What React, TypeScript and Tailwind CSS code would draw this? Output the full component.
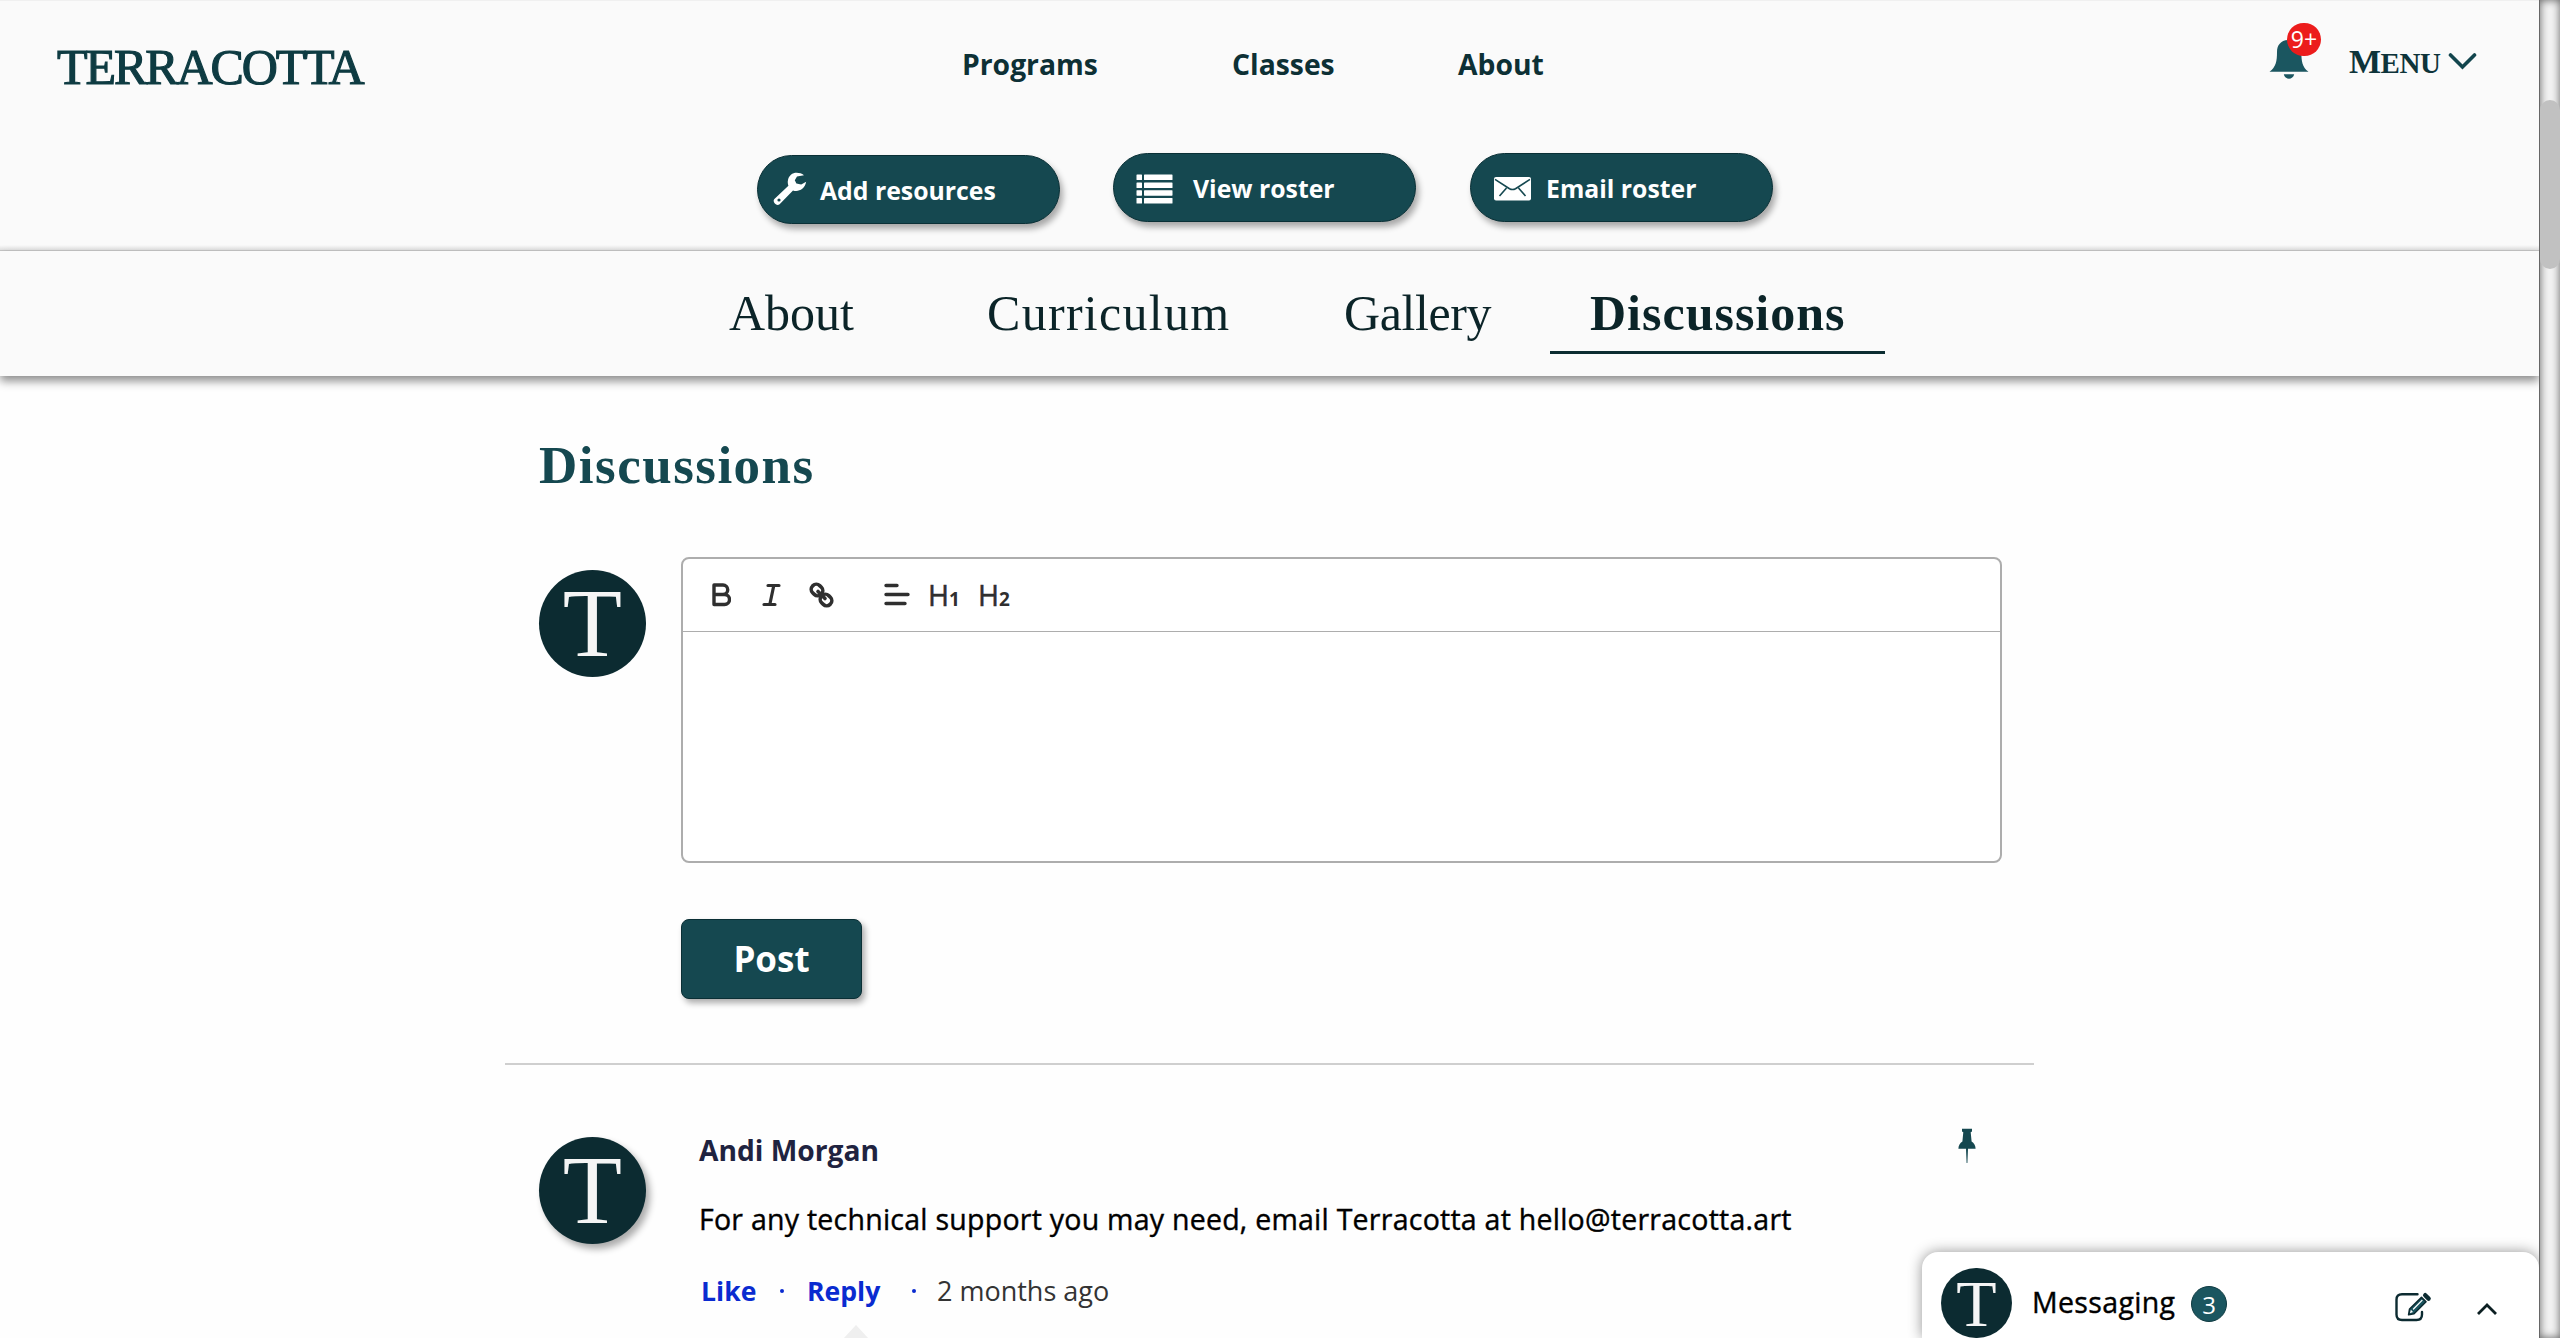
import { ReactNode } from "react";
import clsx from "clsx";

const navLinks = [
    { label: "Programs", className: "ml-[596px] w-[137px]" },
    { label: "Classes", className: "ml-[133px] w-[104px]" },
    { label: "About", className: "ml-[122px] w-[87px]" },
];

const WrenchIcon = () => (
    <svg className="ml-[15px] mt-[16px] h-[34px] w-[34px] shrink-0" viewBox="0 0 34 34" fill="white">
        <path
            fillRule="evenodd"
            d="M31 3.2C25 -1 16 0 14.8 9.2C14.6 11 15 12.6 15.4 13.8L1.4 27C-1.2 29.6 3.4 35 6.6 32.2L20 18.4C25 20 31.5 18 33.2 9.8L28.2 12.6L23.4 11.6L21.8 8.2L24 4.6ZM6 26.4A1.6 1.6 0 1 1 6 29.6A1.6 1.6 0 1 1 6 26.4Z"
        />
    </svg>
);

const ListIcon = () => (
    <svg className="ml-[22px] mt-[20px] h-[30px] w-[37px] shrink-0" viewBox="0 0 37 30" fill="white">
        {[0.5, 8.5, 16.2, 24].map((y) => (
            <g key={y}>
                <rect x="0.5" y={y} width="5.5" height="5.5" rx="0.6" />
                <rect x="8" y={y} width="28.5" height="5.5" rx="0.6" />
            </g>
        ))}
    </svg>
);

const MailIcon = () => (
    <svg className="ml-[23px] mt-[23px] h-[24px] w-[37px] shrink-0" viewBox="0 0 37 24">
        <rect width="37" height="23.5" rx="2" fill="white" />
        <path d="M1 2.4L15.5 11.7Q18.5 13.4 21.5 11.7L36 2.4M12.5 11L5.5 19M24.5 11L31.5 19" fill="none" stroke="#154850" strokeWidth="1.6" />
    </svg>
);

const Avatar = ({ className, letterClass }: { className?: string; letterClass: string }) => (
    <div className={clsx("flex shrink-0 justify-center rounded-full bg-[#0c2b31] font-['Liberation_Serif',serif] text-[#f5f5f5]", className)}>
        <span className={letterClass}>T</span>
    </div>
);

interface ActionButtonProps {
    icon: ReactNode;
    label: string;
    className: string;
    textClass: string;
}

const ActionButton = ({ icon, label, className, textClass }: ActionButtonProps) => (
    <button className={clsx("flex h-[69px] w-[303px] items-start rounded-full border border-[#0a3036] bg-[#154850] text-left shadow-[3px_5px_6px_rgba(0,0,0,0.33)]", className)}>
        {icon}
        <span className={clsx("mt-[16px] whitespace-nowrap text-[24.8px] font-bold leading-[36px] text-white", textClass)}>{label}</span>
    </button>
);

const Header = () => (
    <header className="h-[251px] border-t border-[#f0f0f0] bg-[#fafafa]">
        <div className="flex h-[130px] items-start">
            <div className="ml-[57px] mt-[37px] w-[309px] whitespace-nowrap font-['Liberation_Serif',serif] text-[50px] leading-[58px] tracking-[-2.1px] text-[#0e3b42] [-webkit-text-stroke:1.2px_#0e3b42]">
                TERRACOTTA
            </div>
            <nav className="mt-[43px] flex text-[28.3px] font-bold leading-[40px] text-[#0d3035]">
                {navLinks.map((link) => (
                    <a key={link.label} className={clsx("whitespace-nowrap", link.className)}>
                        {link.label}
                    </a>
                ))}
            </nav>
            <div className="relative ml-[724px] mt-[38px] h-[42px] w-[40px]">
                <svg className="h-[42px] w-[40px]" viewBox="0 0 40 42" fill="#1b5660">
                    <path d="M20 1C12 1 8 6 8 13C8 22 7 28 0.5 32.8H39.5C33 28 32.5 22 32.3 13C32 6 28 1 20 1ZM14.8 35.3H25.2C24 41.2 16 41.2 14.8 35.3Z" />
                </svg>
                <span className="absolute left-[18px] top-[-16px] flex h-[33px] w-[34px] items-center justify-center rounded-full bg-[#ec1c1c] text-[23px] leading-none text-white">9+</span>
            </div>
            <div className="ml-[40px] mt-[41px] flex w-[93px] items-baseline whitespace-nowrap font-['Liberation_Serif',serif] font-bold leading-[40px] text-[#0e343a]">
                <span className="text-[34px] leading-[40px] tracking-[-0.6px]">M</span>
                <span className="text-[29px] leading-[40px] tracking-[-0.4px]">ENU</span>
            </div>
            <svg className="ml-[6px] mt-[51px] h-[19px] w-[29px]" viewBox="0 0 29 19">
                <path d="M2.5 3L14.5 15L26.5 3" fill="none" stroke="#12454d" strokeWidth="3.6" strokeLinecap="round" />
            </svg>
        </div>
        <div className="ml-[757px] flex items-start">
            <ActionButton icon={<WrenchIcon />} label="Add resources" className="mt-[24px]" textClass="ml-[13px]" />
            <ActionButton icon={<ListIcon />} label="View roster" className="ml-[53px] mt-[22px]" textClass="ml-[20px]" />
            <ActionButton icon={<MailIcon />} label="Email roster" className="ml-[54px] mt-[22px]" textClass="ml-[15px]" />
        </div>
    </header>
);

const Tabs = () => (
    <div className="relative flex h-[125px] items-start whitespace-nowrap bg-[#fafafa] font-['Liberation_Serif',serif] text-[50px] leading-[58px] text-[#0b2428] shadow-[0_5px_9px_rgba(0,0,0,0.45)]">
        <a className="ml-[729px] mt-[33px] w-[126px]">About</a>
        <a className="ml-[132px] mt-[33px] w-[243px] tracking-[1.3px]">Curriculum</a>
        <a className="ml-[114px] mt-[33px] w-[148px] tracking-[-0.4px]">Gallery</a>
        <a className="ml-[58px] h-[103px] w-[335px] border-b-[3px] border-[#0b2c31] pl-[40px] pt-[33px] font-bold tracking-[1px]">Discussions</a>
    </div>
);

const Toolbar = () => (
    <div className="flex h-[73px] items-start border-b border-[#adadad] text-[#2f2f2f]">
        <svg className="ml-[29px] mt-[24px] h-[24px] w-[19px]" viewBox="0 0 19 24" fill="none" stroke="currentColor" strokeWidth="3.4" strokeLinejoin="round">
            <path d="M2 2H11A4.6 4.6 0 0 1 11 11.5H2ZM2 11.5H12.5A5 5 0 0 1 12.5 21.5H2Z" />
        </svg>
        <svg className="ml-[31px] mt-[24px] h-[24px] w-[19px]" viewBox="0 0 19 24" fill="none" stroke="currentColor" strokeWidth="3.2" strokeLinecap="round">
            <path d="M6 2.5H17M2 21.5H13M11.8 2.5L7.8 21.5" />
        </svg>
        <svg className="ml-[27px] mt-[22px] h-[28px] w-[27px]" viewBox="0 0 27 28" fill="none" stroke="currentColor" strokeWidth="3.6" strokeLinecap="round">
            <rect x="-5" y="-6" width="10" height="12" rx="4.8" transform="translate(9 9) rotate(-45)" />
            <rect x="-5" y="-6" width="10" height="12" rx="4.8" transform="translate(18 19) rotate(-45)" />
            <path d="M10 10.5L17 17.5" />
        </svg>
        <svg className="ml-[48px] mt-[24px] h-[26px] w-[28px]" viewBox="0 0 28 26" fill="none" stroke="currentColor" strokeWidth="3.4" strokeLinecap="round">
            <path d="M3 2.5H14M3 11.5H25M3 20.5H22" />
        </svg>
        <div className="ml-[17px] mt-[16px] flex h-[40px] w-[28px] items-baseline leading-[40px]">
            <span className="text-[28.5px] [-webkit-text-stroke:0.5px_#2f2f2f]">H</span>
            <span className="text-[19px] font-bold">1</span>
        </div>
        <div className="ml-[22px] mt-[16px] flex h-[40px] items-baseline leading-[40px]">
            <span className="text-[28.5px] [-webkit-text-stroke:0.5px_#2f2f2f]">H</span>
            <span className="text-[19px] font-bold">2</span>
        </div>
    </div>
);

const Composer = () => (
    <section className="ml-[539px] flex items-start">
        <Avatar className="mt-[13px] h-[107px] w-[107px]" letterClass="text-[97px] leading-[108px]" />
        <div className="ml-[35px] w-[1321px]">
            <div className="h-[306px] rounded-[8px] border-2 border-[#adadad] bg-white">
                <Toolbar />
            </div>
            <button className="mt-[56px] flex h-[80px] w-[181px] items-center justify-center rounded-[8px] border border-[#0a2f35] bg-[#154850] pb-[1px] text-[35px] font-bold leading-[48px] text-white shadow-[3px_4px_6px_rgba(0,0,0,0.33)]">
                Post
            </button>
        </div>
    </section>
);

const Post = () => (
    <article className="ml-[539px] flex items-start">
        <Avatar className="mt-[72px] h-[107px] w-[107px] shadow-[4px_5px_7px_rgba(0,0,0,0.33)]" letterClass="text-[97px] leading-[108px]" />
        <div className="ml-[53px] w-[1100px] pt-[65px]">
            <h3 className="text-[28.2px] font-bold leading-[40px] text-[#1f2340]">Andi Morgan</h3>
            <p className="mt-[29px] whitespace-nowrap text-[28.5px] leading-[40px] tracking-[0.25px] text-black [-webkit-text-stroke:0.4px_black]">
                For any technical support you may need, email Terracotta at hello@terracotta.art
            </p>
            <div className="mt-[32px] flex h-[40px] items-center whitespace-nowrap text-[26.6px] leading-[40px] text-[#0a2bd0]">
                <a className="ml-[2px] w-[56px] font-bold">Like</a>
                <span className="ml-[23px] h-[4px] w-[4px] rounded-full bg-[#0a2bd0]" />
                <a className="ml-[23px] w-[75px] font-bold">Reply</a>
                <span className="ml-[30px] h-[4px] w-[4px] rounded-full bg-[#0a2bd0]" />
                <span className="ml-[21px] text-[27px] text-[#333333]">2 months ago</span>
            </div>
            <svg className="ml-[144px] mt-[14px] h-[14px] w-[26px]" viewBox="0 0 26 14" fill="#efefef">
                <path d="M13 0L26 14H0Z" />
            </svg>
        </div>
        <svg className="ml-[159px] mt-[63px] h-[36px] w-[18px]" viewBox="0 0 18 36" fill="#154850">
            <path d="M4 0.8H14V3.6L12.7 4.2L13.6 13.5C16 15 17.6 17.6 17.6 20.8H10L9.4 35H8.6L8 20.8H0.4C0.4 17.6 2 15 4.4 13.5L5.3 4.2L4 3.6Z" />
        </svg>
    </article>
);

const MessagingBar = () => (
    <div className="absolute right-0 top-[1252px] flex h-[86px] w-[617px] items-start rounded-t-[16px] bg-white shadow-[0_0_14px_rgba(0,0,0,0.42)]">
        <Avatar className="ml-[19px] mt-[16px] h-[70px] w-[71px]" letterClass="h-[70px] text-[66px] leading-[72px]" />
        <span className="ml-[20px] mt-[30px] w-[145px] whitespace-nowrap text-[28.5px] leading-[40px] tracking-[0.35px] text-black [-webkit-text-stroke:0.4px_black]">Messaging</span>
        <span className="ml-[14px] mt-[34px] flex h-[36px] w-[36px] items-center justify-center rounded-full border border-[#0f3a41] bg-[#1b5660] pt-[1px] text-[24px] leading-none text-white">3</span>
        <svg className="ml-[167px] mt-[40px] h-[31px] w-[38px]" viewBox="0 0 38 31" fill="none" stroke="#0c2b31" strokeWidth="2.4" strokeLinecap="round">
            <path d="M23.5 2.3H8Q2.5 2.3 2.5 7.8V22.5Q2.5 28 8 28H22.5Q28 28 28 22.5V20" />
            <path d="M14.6 22.8L15.6 17L27.5 5.4L32 9.8L20 21.8Z" fill="#1b5660" strokeWidth="1.6" strokeLinejoin="round" />
            <path d="M15.9 21.3L16.9 17.8L19 19.9Z" fill="white" stroke="none" />
            <path d="M19.5 17L28 8.4" stroke="white" strokeWidth="1.3" />
            <path d="M31.2 3.2L34.6 6.6" strokeWidth="4.4" />
        </svg>
        <svg className="ml-[44px] mt-[50px] h-[14px] w-[22px]" viewBox="0 0 22 14">
            <path d="M2 12L11 3L20 12" fill="none" stroke="#0c1f22" strokeWidth="2.8" />
        </svg>
    </div>
);

const App = () => {
    return (
        <div className="flex h-[1338px] w-[2560px] overflow-hidden bg-white font-['Open_Sans',sans-serif]">
            <div className="relative h-full w-[2539px] overflow-hidden bg-[#fefefe]">
                <Header />
                {/* thin shadow over the tab row */}
                <div className="relative -mt-[6px] h-[6px] border-b border-[#c8c8c8] bg-gradient-to-b from-[#fafafa] to-[#e4e4e4]" />
                <Tabs />
                <h1 className="ml-[539px] mt-[58px] whitespace-nowrap font-['Liberation_Serif',serif] text-[53px] font-bold leading-[62px] tracking-[1.5px] text-[#154850]">Discussions</h1>
                <div className="mt-[61px]">
                    <Composer />
                </div>
                <hr className="ml-[505px] mt-[64px] w-[1529px] border-t-2 border-[#cfcfcf]" />
                <Post />
                <MessagingBar />
            </div>

            {/* scrollbar */}
            <div className="h-full w-[21px] border-l border-[#666666] bg-[#f2f2f2] pt-[100px] shadow-[inset_0_0_9px_rgba(0,0,0,0.6)]">
                <div className="h-[169px] w-[20px] rounded-full bg-[#c1c1c1]" />
            </div>
        </div>
    );
};

export default App;
